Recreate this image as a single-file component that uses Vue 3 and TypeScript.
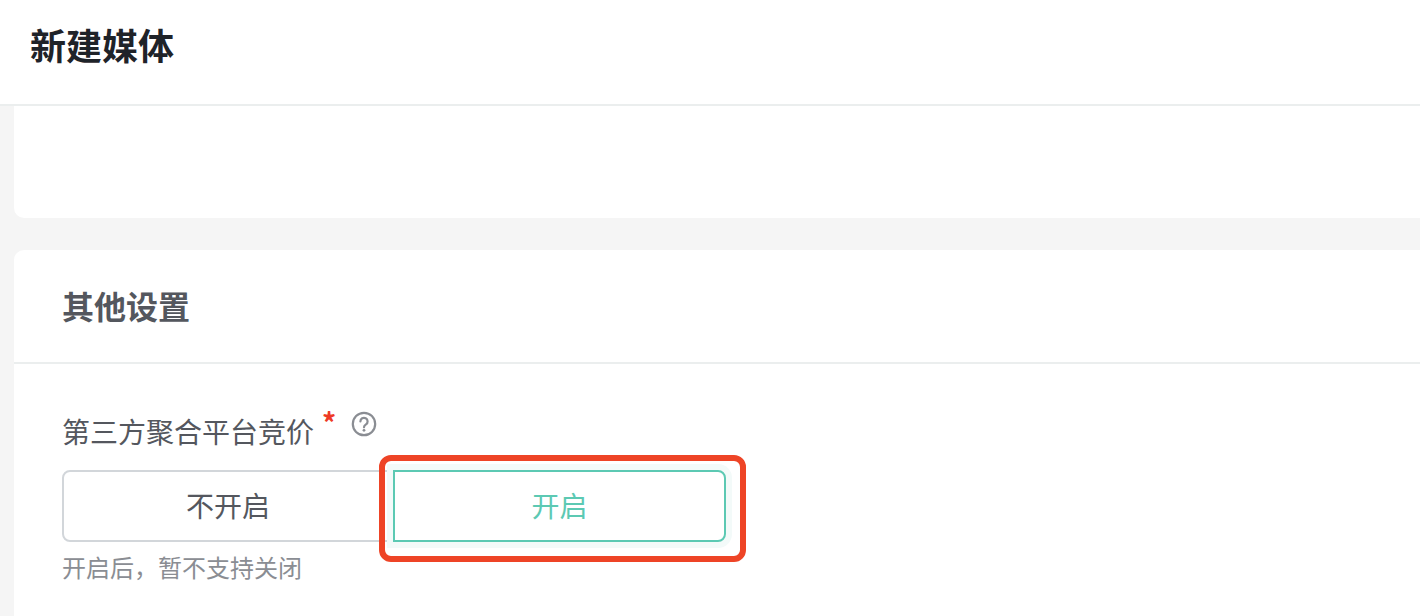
<script setup lang="ts">
const options: { label: string; active: boolean }[] = [
  { label: '不开启', active: false },
  { label: '开启', active: true },
]
</script>

<template>
  <div class="page">
    <header class="top">新建媒体</header>
    <main class="content">
      <section class="card first"></section>
      <section class="card second">
        <h2 class="card-title">其他设置</h2>
        <div class="card-body">
          <div class="label-row">
            <span class="label">第三方聚合平台竞价</span>
            <span class="req">*</span>
            <svg class="help" width="26" height="26" viewBox="0 0 26 26" fill="none">
              <circle cx="13" cy="13" r="11.2" stroke="#8a8d93" stroke-width="2.2" />
              <path d="M9.4 10.4a3.6 3.6 0 1 1 5.6 3c-1.3.9-2 1.5-2 2.9" stroke="#8a8d93" stroke-width="2.2" stroke-linecap="round" />
              <circle cx="13" cy="19.3" r="1.4" fill="#8a8d93" />
            </svg>
          </div>
          <div class="segments">
            <div v-for="o in options" :key="o.label" class="segment" :class="{ active: o.active }">{{ o.label }}</div>
            <div class="mark"></div>
          </div>
          <p class="hint">开启后，暂不支持关闭</p>
        </div>
      </section>
    </main>
  </div>
</template>

<style>
html, body { margin: 0; background: #f4f4f4; overflow: hidden; }
</style>

<style scoped>
.page {
  width: 1420px;
  height: 616px;
  overflow: hidden;
  background: #f5f5f5;
  font-family: "Noto Sans CJK SC", "Noto Sans", sans-serif;
}
.top {
  height: 104px;
  box-sizing: content-box;
  background: #fff;
  border-bottom: 2px solid #ebeeee;
  padding-left: 30px;
  font-size: 36px;
  line-height: 88px;
  font-weight: 700;
  color: #1f2329;
}
.content {
  padding-left: 14px;
  display: flex;
  flex-direction: column;
  gap: 32px;
}
.card { background: #fff; }
.first { height: 112px; border-radius: 0 0 0 10px; }
.second { border-radius: 10px 0 0 0; height: 400px; }
.card-title {
  margin: 0;
  height: 112px;
  padding-left: 48px;
  border-bottom: 2px solid #ebeeee;
  font-size: 32px;
  line-height: 110px;
  font-weight: 700;
  color: #54575e;
}
.card-body { padding: 40px 0 0 48px; }
.label-row {
  display: flex;
  align-items: flex-start;
  height: 56px;
}
.label {
  font-size: 28px;
  line-height: 54px;
  color: #54575e;
}
.req {
  font-size: 28px;
  font-weight: 700;
  line-height: 36px;
  color: #ee3a25;
  margin-left: 8px;
  width: 29px;
}
.help { margin-top: 7px; }
.segments {
  position: relative;
  display: flex;
  width: 664px;
  height: 72px;
  margin-top: 10px;
}
.segment {
  flex: 0 0 332px;
  box-sizing: border-box;
  height: 72px;
  border: 2px solid #d2d6da;
  border-radius: 8px 0 0 8px;
  font-size: 28px;
  line-height: 66px;
  text-align: center;
  color: #54575e;
  background: #fff;
}
.segment.active {
  flex-basis: 333px;
  margin-left: -1px;
  border: 2px solid #5cc9b3;
  border-radius: 0 8px 8px 0;
  color: #5cc9b3;
  box-shadow: 0 0 0 6px #f3faf9;
  position: relative;
}
.mark {
  position: absolute;
  left: 317px;
  top: -15px;
  width: 367px;
  height: 107px;
  box-sizing: border-box;
  border: 6px solid #ee4426;
  border-radius: 12px;
}
.hint {
  margin: 9px 0 0;
  font-size: 24px;
  line-height: 32px;
  color: #8a8d93;
}
</style>
